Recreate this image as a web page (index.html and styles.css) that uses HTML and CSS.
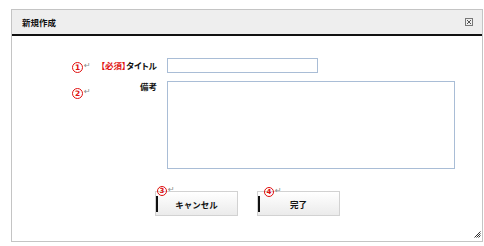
FILE: index.html
```html
<!DOCTYPE html>
<html lang="ja">
<head>
    <meta charset="UTF-8">
    <title>新規作成</title>
    <link rel="stylesheet" href="styles.css">
</head>
<body>
    <div class="dialog">
        <div class="dialog-head">
            <span class="dialog-title">新規作成</span>
            <span class="dialog-close">
                <svg width="8" height="8" viewBox="0 0 8 8">
                    <rect x="0.5" y="0.5" width="7" height="7" fill="none" stroke="#777"/>
                    <path d="M2 2 L6 6 M6 2 L2 6" stroke="#555" stroke-width="1"/>
                </svg>
            </span>
        </div>

        <form class="dialog-body">
            <div class="row">
                <span class="mark mark-1"><span class="num">1</span><span class="ret">↵</span></span>
                <label class="label" for="title"><span class="req">【必須】</span>タイトル</label>
                <input class="field-title" type="text" id="title">
            </div>
            <div class="row row-memo">
                <span class="mark mark-2"><span class="num">2</span><span class="ret">↵</span></span>
                <label class="label label-memo" for="memo">備考</label>
                <textarea class="field-memo" id="memo"></textarea>
            </div>

            <div class="buttons">
                <div class="btn-wrap">
                    <span class="mark-btn"><span class="num num-small">3</span><span class="ret">↵</span></span>
                    <button type="button" class="btn">キャンセル</button>
                </div>
                <div class="btn-wrap">
                    <span class="mark-btn mark-4"><span class="num num-small">4</span><span class="ret">↵</span></span>
                    <button type="submit" class="btn">完了</button>
                </div>
            </div>
        </form>

        <span class="grip">
            <svg width="7" height="7" viewBox="0 0 7 7">
                <path d="M6.5 0.5 L0.5 6.5 M6.5 2.5 L2.5 6.5 M6.5 4.5 L4.5 6.5" stroke="#333" stroke-width="1"/>
            </svg>
        </span>
    </div>
</body>
</html>
```

FILE: styles.css
```css
body {
    margin: 0;
    padding: 0;
    background-color: white;
    color: #111;
    font-family: "Noto Sans CJK JP", "Noto Sans", sans-serif;
}

.dialog {
    position: relative;
    box-sizing: border-box;
    width: 472px;
    height: 233px;
    margin: 9px 0 0 11px;
    border: 1px solid #c4c4c4;
}

.dialog-head {
    display: flex;
    align-items: center;
    justify-content: space-between;
    height: 24px;
    padding: 0 9px 0 10px;
    background-color: #eeeeee;
    border-bottom: 2px solid #111;
}

.dialog-title {
    font-size: 8.5px;
    font-weight: bold;
    line-height: 24px;
}

.dialog-close {
    display: flex;
    width: 8px;
    height: 8px;
}

.dialog-body {
    padding: 22px 0 0 58px;
}

.row {
    display: grid;
    grid-template-columns: 26px 61px auto;
    align-items: start;
}

.row-memo {
    margin-top: 8px;
}

.mark {
    display: flex;
    align-items: flex-start;
    margin: 4px 0 0 2px;
}

.mark-2 {
    margin-top: 7px;
}

.num {
    display: inline-flex;
    align-items: center;
    justify-content: center;
    box-sizing: border-box;
    width: 11px;
    height: 11px;
    border: 1.5px solid #e01010;
    border-radius: 50%;
    color: #e01010;
    font-family: "DejaVu Sans", sans-serif;
    font-size: 7.5px;
    font-weight: bold;
    line-height: 1;
}

.num-small {
    width: 10px;
    height: 10px;
    font-size: 7px;
}

.ret {
    color: #8a8a8a;
    font-family: "DejaVu Sans", sans-serif;
    font-size: 8px;
    line-height: 7px;
    margin-left: 1px;
}

.label {
    font-size: 8.5px;
    font-weight: bold;
    line-height: 15px;
    text-align: right;
    white-space: nowrap;
    font-feature-settings: "palt";
}

.label-memo {
    line-height: 11px;
}

.req {
    color: #e01010;
}

.field-title, .field-memo {
    display: block;
    box-sizing: border-box;
    margin: 0 0 0 10px;
    padding: 0;
    border: 1px solid #a9bdd6;
    background: white;
    font: inherit;
}

.field-title {
    width: 151px;
    height: 15px;
}

.field-memo {
    width: 288px;
    height: 88px;
    resize: none;
}

.buttons {
    display: flex;
    gap: 19px;
    margin: 22px 0 0 85px;
}

.btn-wrap {
    position: relative;
}

.btn {
    position: relative;
    display: block;
    box-sizing: border-box;
    width: 83px;
    height: 25px;
    padding: 0;
    border: 1px solid #d2d2d2;
    background: linear-gradient(#ffffff, #ebebeb);
    color: #111;
    font-family: inherit;
    font-size: 8.5px;
    font-weight: bold;
}

.btn::before {
    content: "";
    position: absolute;
    left: 0;
    top: 4px;
    width: 2px;
    height: 16px;
    background-color: #111;
}

.mark-btn {
    position: absolute;
    left: 2px;
    top: -5px;
    z-index: 1;
    display: flex;
    align-items: flex-start;
}

.mark-4 {
    left: 7px;
    top: -4px;
}

.grip {
    position: absolute;
    right: 1px;
    bottom: 3px;
    display: flex;
}
```
